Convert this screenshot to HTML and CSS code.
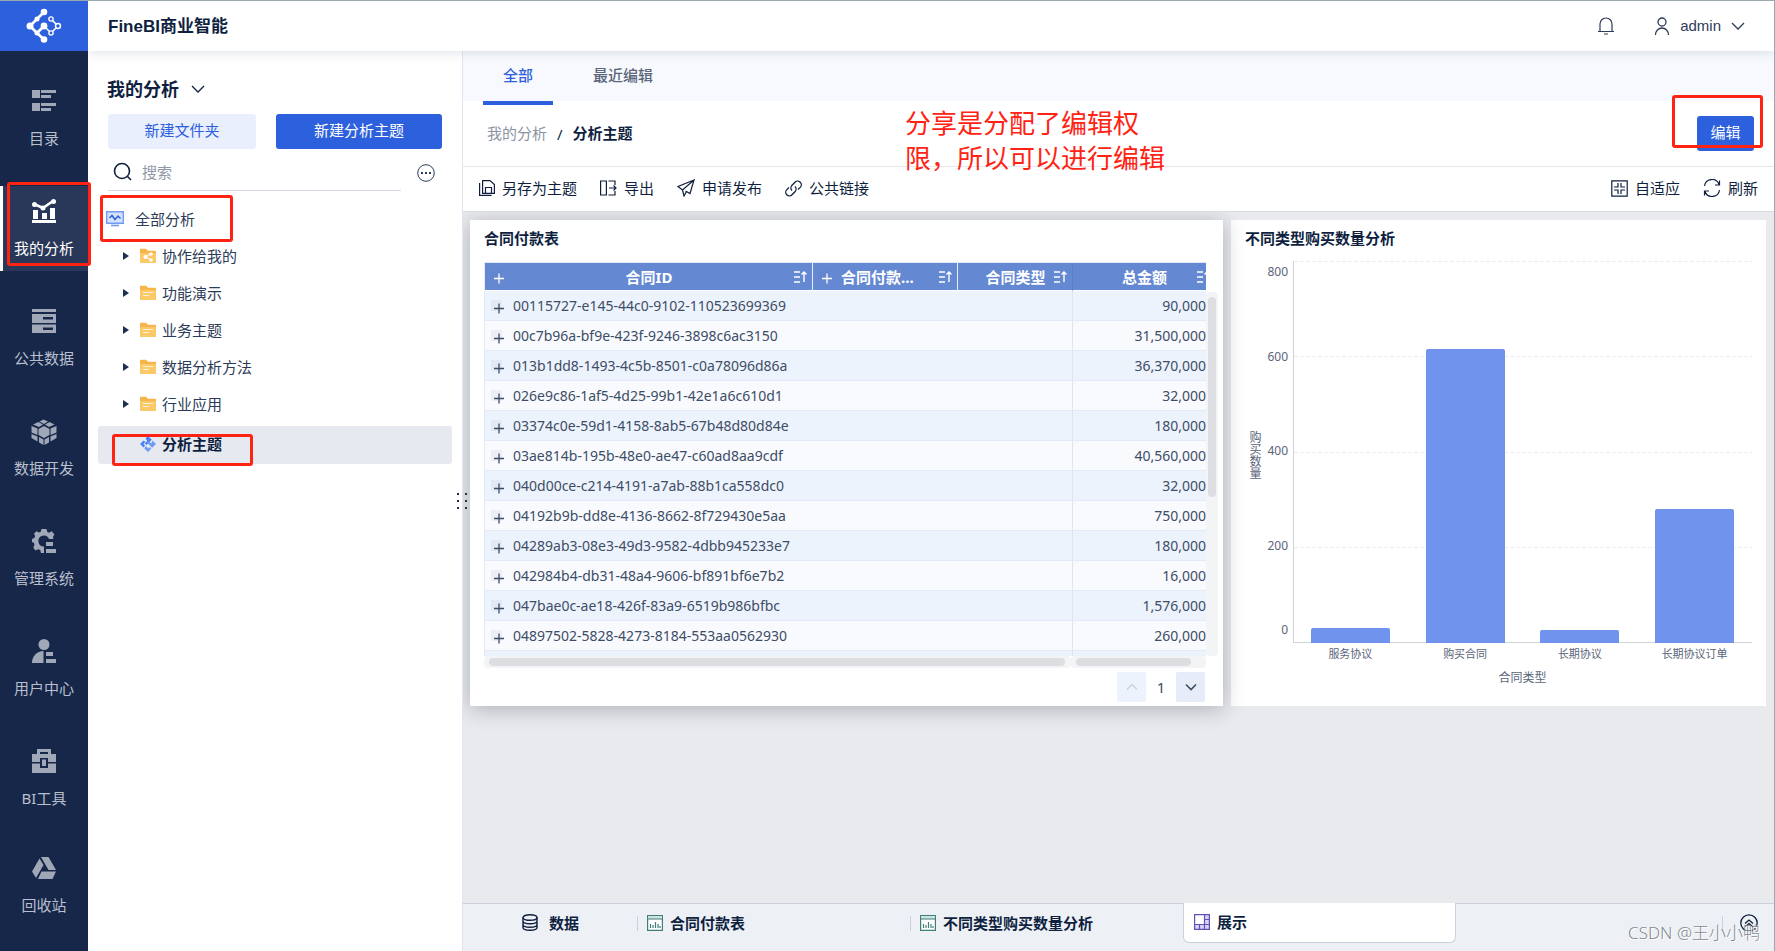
FILE: index.html
```html
<!DOCTYPE html>
<html lang="zh-CN">
<head>
<meta charset="utf-8">
<title>FineBI商业智能</title>
<link rel="stylesheet" href="styles.css">
</head>
<body>
<svg class="defs" aria-hidden="true">
  <symbol id="sort" viewBox="0 0 14 14"><path d="M1 2h6M1 7h6M1 12h6M11 12V2M8.500 4.500 11 2l2.500 2.500" fill="none" stroke="currentColor" stroke-width="1.400"/></symbol>
  <symbol id="plus" viewBox="0 0 14 14"><path class="plus-bg" d="M0 0h11v11H0z"/><path d="M3 8.500h10M8 3.500v10" fill="none" stroke="currentColor" stroke-width="1.300"/></symbol>
  <symbol id="down" viewBox="0 0 14 14"><path d="M1 4l6 6 6-6" fill="none" stroke="currentColor" stroke-width="1.300"/></symbol>
  <symbol id="folder" viewBox="0 0 16 16"><path d="M0 1.500A.8.8 0 0 1 .8.700H6l2 2h7a1 1 0 0 1 1 1V14a1 1 0 0 1-1 1H1a1 1 0 0 1-1-1z" fill="#f5b54a"/><path d="M0 5h16v9a1 1 0 0 1-1 1H1a1 1 0 0 1-1-1z" fill="#fcc968"/></symbol>
  <symbol id="chart-sheet" viewBox="0 0 16 16"><path d="M.6.600h14.800v14.800H.6z" fill="#fff" stroke="#3f7f78" stroke-width="1.200"/><path d="M1 1h14v3H1z" fill="#cfe3e0"/><path d="M1 4h14" stroke="#3f7f78"/><path d="M3.500 13V9M6 13v-3M8.500 13V7M11 13v-4M13 13v-2" stroke="#3f7f78" stroke-width="1.200"/></symbol>
</svg>

<aside class="sidebar">
  <a class="logo" href="#" aria-label="FineBI">
    <svg width="36" height="36" viewBox="0 0 36 36" fill="none" stroke="#fff"><path d="M18 4 11 11 4 18l7 7 7 6.500M11 25l7-7" stroke-width="2.600"/><path d="M18 18l7 7 7-7-7-7" stroke-width="1.500"/><g fill="#fff" stroke="none"><circle cx="18" cy="4" r="3.300"/><circle cx="4" cy="18" r="3.500"/><circle cx="18" cy="31.500" r="3.300"/><circle cx="18" cy="18" r="3.400"/><circle cx="11" cy="11" r="2.500"/><circle cx="11" cy="25" r="2.500"/></g><g fill="#2c60dc" stroke-width="1.400"><circle cx="25" cy="11" r="2.100"/><circle cx="32" cy="18" r="2.500"/><circle cx="25" cy="25" r="2.100"/></g></svg>
  </a>
  <nav class="nav">
    <a class="nav-item" href="#"><svg width="24" height="24" viewBox="0 0 24 24"><path d="M0 1h8v8H0zM9 1h15v3H9zM9 6h10v3H9zM0 14h8v8H0zM9 14h15v3H9zM9 19h10v3H9z"/></svg>目录</a>
    <a class="nav-item active" href="#"><svg width="24" height="24" viewBox="0 0 24 24"><path d="M0 21h24v3H0zM1 11h5v9H1zM10 14h5v6h-5zM18 9h5v11h-5z"/><path d="M2 5l9 4L21 2" fill="none" stroke="#fff" stroke-width="2.500"/><circle cx="2.500" cy="5.500" r="2.500"/><circle cx="11" cy="9" r="2.500"/><circle cx="21.500" cy="2.500" r="2.500"/></svg>我的分析<span class="mark mark-nav"></span></a>
    <a class="nav-item" href="#"><svg width="24" height="24" viewBox="0 0 24 24"><path fill-rule="evenodd" d="M0 0h24v3H0zM0 5h24v9H0zM11 8v2.500h10V8zM0 15.500h24V24H0zM11 18.500V21h10v-2.500z"/></svg>公共数据</a>
    <a class="nav-item" href="#"><svg width="26" height="26" viewBox="0 0 26 26"><path d="M12.500.500 17 2.500 13 5 8.500 2.500zM7.500 3l4.500 2.500-4 2.500L2 5.500zM18.500 3l5 2.500L18 8l-4-2.500zM13 7l5.500 3v6L13 19l-5.500-3v-6zM.5 7l6 2.500V16l-6-2.500zM25.500 7l-6 2.500V16l6-2.500zM.5 15l6 2.500v5l-6-3.500zM25.500 15l-6 2.500v5l6-3.500zM8 18l4.500 2.500V26L8 23.500zM18 18l-4.500 2.500V26l4.500-2.500z"/></svg>数据开发</a>
    <a class="nav-item" href="#"><svg width="24" height="24" viewBox="0 0 24 24"><path d="M9.500 0h5l.8 3 1.700.8 2.800-1.500 2.600 3.200-1.500 2.500.6 2H17a5.500 5.500 0 1 0-5 7.500V24H9l-.8-3-2-.8-2.800 1.300L1.300 18.500l1.200-2.700L2 14l-2-1v-3l2.300-1 .8-2L2 4.500 4.500 2.300 7 3.500l1.800-.8zM14 13h7v4h-7zM14 20h10v4H14z"/></svg>管理系统</a>
    <a class="nav-item" href="#"><svg width="24" height="24" viewBox="0 0 24 24"><circle cx="12" cy="5.500" r="5.500"/><path d="M11.500 12v12H0C0 17 5 12 11.500 12zM14 13h7v4h-7zM14 20h10v4H14z"/></svg>用户中心</a>
    <a class="nav-item" href="#"><svg width="24" height="24" viewBox="0 0 24 24"><path fill-rule="evenodd" d="M5 0h14v5h5v8h-8V9H8v4H0V5h5zM8 3v2h8V3zM0 14.500h8V19h8v-4.500h8V24H0zM10 10.500h4V17h-4z"/></svg>BI工具</a>
    <a class="nav-item last" href="#"><svg width="24" height="24" viewBox="0 0 24 24"><path d="M9 1h7.500L24 14h-7.500zM7.500 2.500 11.500 9 4 22 0 15.500zM9.500 15.500H24L20.500 23H6z"/></svg>回收站</a>
  </nav>
</aside>

<div class="app">
  <header class="topbar">
    <h1 class="brand">FineBI商业智能</h1>
    <button class="plain bell" aria-label="消息"><svg width="18" height="18" viewBox="0 0 18 18" fill="none" stroke="currentColor" stroke-width="1.200"><path d="M1 14.500h16M3 14.500V7a6 6 0 0 1 12 0v7.500M7 17h4"/></svg></button>
    <button class="plain user"><svg width="16" height="18" viewBox="0 0 16 18" fill="none" stroke="currentColor" stroke-width="1.300"><circle cx="8" cy="5" r="4"/><path d="M1.500 18a6.500 7 0 0 1 13 0"/></svg><span>admin</span><svg width="14" height="14"><use href="#down"/></svg></button>
  </header>

  <div class="body">
    <section class="panel">
      <button class="plain panel-title">我的分析<svg width="14" height="14"><use href="#down"/></svg></button>
      <div class="panel-actions">
        <button class="btn btn-soft">新建文件夹</button>
        <button class="btn btn-primary">新建分析主题</button>
      </div>
      <div class="search-row">
        <label class="search"><svg width="20" height="20" viewBox="0 0 20 20" fill="none" stroke="currentColor" stroke-width="1.600"><circle cx="9" cy="9" r="7.500"/><path d="M14.500 14.500 18 18"/></svg><input type="text" placeholder="搜索" aria-label="搜索"></label>
        <button class="plain more" aria-label="更多"><svg width="18" height="18" viewBox="0 0 18 18"><circle cx="9" cy="9" r="8.300" fill="none" stroke="currentColor"/><path d="M4 8h2v2H4zM8 8h2v2H8zM12 8h2v2h-2z" fill="currentColor"/></svg></button>
      </div>
      <ul class="tree">
        <li class="tree-root"><svg width="18" height="16" viewBox="0 0 18 16"><path d="M.7.700h16.600v11.600H.7z" fill="#d6e2fd" stroke="#6f9af5" stroke-width="1.400"/><path d="M3.500 7 6 4.500l3 4L12 5l2.500 2.500" fill="none" stroke="#2c60dc" stroke-width="1.500"/><path d="M5 14.500h8" stroke="#6f9af5" stroke-width="1.600"/></svg>全部分析<span class="mark mark-root"></span></li>
        <li class="tree-row"><i class="caret"></i><svg width="16" height="16"><use href="#folder"/><path d="M11 5.500 6 9l5 3" stroke="#fff" fill="none"/><g fill="#fff"><circle cx="11" cy="6" r="1.800"/><circle cx="5.500" cy="9" r="2"/><circle cx="11" cy="12" r="1.800"/></g></svg>协作给我的</li>
        <li class="tree-row"><i class="caret"></i><svg width="16" height="16"><use href="#folder"/><path d="M3 7.500h10M3 10.500h6" stroke="#fff3d6"/></svg>功能演示</li>
        <li class="tree-row"><i class="caret"></i><svg width="16" height="16"><use href="#folder"/><path d="M3 7.500h10M3 10.500h6" stroke="#fff3d6"/></svg>业务主题</li>
        <li class="tree-row"><i class="caret"></i><svg width="16" height="16"><use href="#folder"/><path d="M3 7.500h10M3 10.500h6" stroke="#fff3d6"/></svg>数据分析方法</li>
        <li class="tree-row"><i class="caret"></i><svg width="16" height="16"><use href="#folder"/><path d="M3 7.500h10M3 10.500h6" stroke="#fff3d6"/></svg>行业应用</li>
        <li class="tree-row selected"><svg width="16" height="16" viewBox="0 0 16 16"><path d="M8 0l3.800 3.800-5.300 5.300L4.800 7.400l2.400-2.400L5.500 2.500z" fill="#4a82f5"/><path d="M12.500 4.500 16 8l-3.800 3.800-5-5L8.800 5.200l2.400 2.400z" fill="#6f9af5"/><path d="M8 16l-3.800-3.800 2-2L8.500 12.500l1.500-1.500 1.200 1.800z" fill="#6f9af5"/><path d="M3.500 4.500 0 8l3.500 3.500L5.200 9.800 3.500 8l2-2z" fill="#4a82f5"/></svg>分析主题<span class="mark mark-leaf"></span></li>
      </ul>
      <span class="grip"></span>
    </section>

    <main class="main">
      <nav class="tabs"><a class="tab current" href="#">全部</a><a class="tab" href="#">最近编辑</a></nav>
      <div class="crumbs">
        <a href="#">我的分析</a><span>/</span><strong>分析主题</strong>
        <span class="edit-wrap"><button class="btn btn-primary">编辑</button><span class="mark mark-edit"></span></span>
        <p class="note">分享是分配了编辑权<br>限，所以可以进行编辑</p>
      </div>
      <div class="toolbar">
        <button class="plain"><svg width="16" height="16" viewBox="0 0 16 16" fill="none" stroke="currentColor" stroke-width="1.200"><path d="M3.600.6H11l4.400 4v8.800H3.600zM.6 3v12.400h12M6.500 13V7.500h6V13"/></svg>另存为主题</button>
        <button class="plain"><svg width="17" height="16" viewBox="0 0 17 16" fill="none" stroke="currentColor" stroke-width="1.200"><path d="M.6 1h5.800v14H.6zM8.500 1H15v4M8.500 15H15v-4M9 8h7M13.500 5.500 16 8l-2.500 2.500"/></svg>导出</button>
        <button class="plain"><svg width="18" height="18" viewBox="0 0 18 18" fill="none" stroke="currentColor" stroke-width="1.200"><path d="M17 1 1 7.500l4.500 3.500L17 1l-4 13.500L8.500 12M5.500 11l1.500 6 2.500-4.500"/></svg>申请发布</button>
        <button class="plain"><svg width="17" height="17" viewBox="0 0 17 17" fill="none" stroke="currentColor" stroke-width="1.300"><path d="M7 10.500a3.700 3.700 0 0 1 0-5.200L10 2.200a3.600 3.600 0 0 1 5.200 5.200L13 9.500M10 6.500a3.700 3.700 0 0 1 0 5.200L7 14.800a3.600 3.600 0 0 1-5.200-5.200L4 7.500"/></svg>公共链接</button>
        <span class="spacer"></span>
        <button class="plain"><svg width="17" height="17" viewBox="0 0 17 17" fill="none" stroke="currentColor" stroke-width="1.200"><path d="M.8.800h15.400v15.400H.8zM3 7h4V3M10 3v4h4M3 10h4v4M10 14v-4h4"/></svg>自适应</button>
        <button class="plain"><svg width="18" height="18" viewBox="0 0 18 18" fill="none" stroke="currentColor" stroke-width="1.200"><path d="M1.500 7A7.500 7.500 0 0 1 16 5.500M16.500 11A7.500 7.500 0 0 1 2 12.500M16.500 1.500v4.500H12M1.500 16.500V12H6"/></svg>刷新</button>
      </div>

      <div class="canvas">
        <section class="card card-table">
          <h2>合同付款表</h2>
          <div class="grid-box">
            <div class="table-clip">
              <table>
                <colgroup><col class="c1"><col class="c2"><col class="c3"><col></colgroup>
                <thead><tr>
                  <th><div class="th"><svg class="pl" width="14" height="14"><use href="#plus"/></svg><span>合同ID</span><svg class="so" width="14" height="14"><use href="#sort"/></svg></div></th>
                  <th><div class="th th-left"><svg class="pl" width="14" height="14"><use href="#plus"/></svg><span>合同付款...</span><svg class="so" width="14" height="14"><use href="#sort"/></svg></div></th>
                  <th><div class="th"><span class="pl"></span><span>合同类型</span><svg class="so" width="14" height="14"><use href="#sort"/></svg></div></th>
                  <th><div class="th"><span class="pl"></span><span>总金额</span><svg class="so" width="14" height="14"><use href="#sort"/></svg></div></th>
                </tr></thead>
                <tbody>
                  <tr><td><svg width="14" height="14"><use href="#plus"/></svg>00115727-e145-44c0-9102-110523699369</td><td></td><td></td><td>90,000</td></tr>
                  <tr><td><svg width="14" height="14"><use href="#plus"/></svg>00c7b96a-bf9e-423f-9246-3898c6ac3150</td><td></td><td></td><td>31,500,000</td></tr>
                  <tr><td><svg width="14" height="14"><use href="#plus"/></svg>013b1dd8-1493-4c5b-8501-c0a78096d86a</td><td></td><td></td><td>36,370,000</td></tr>
                  <tr><td><svg width="14" height="14"><use href="#plus"/></svg>026e9c86-1af5-4d25-99b1-42e1a6c610d1</td><td></td><td></td><td>32,000</td></tr>
                  <tr><td><svg width="14" height="14"><use href="#plus"/></svg>03374c0e-59d1-4158-8ab5-67b48d80d84e</td><td></td><td></td><td>180,000</td></tr>
                  <tr><td><svg width="14" height="14"><use href="#plus"/></svg>03ae814b-195b-48e0-ae47-c60ad8aa9cdf</td><td></td><td></td><td>40,560,000</td></tr>
                  <tr><td><svg width="14" height="14"><use href="#plus"/></svg>040d00ce-c214-4191-a7ab-88b1ca558dc0</td><td></td><td></td><td>32,000</td></tr>
                  <tr><td><svg width="14" height="14"><use href="#plus"/></svg>04192b9b-dd8e-4136-8662-8f729430e5aa</td><td></td><td></td><td>750,000</td></tr>
                  <tr><td><svg width="14" height="14"><use href="#plus"/></svg>04289ab3-08e3-49d3-9582-4dbb945233e7</td><td></td><td></td><td>180,000</td></tr>
                  <tr><td><svg width="14" height="14"><use href="#plus"/></svg>042984b4-db31-48a4-9606-bf891bf6e7b2</td><td></td><td></td><td>16,000</td></tr>
                  <tr><td><svg width="14" height="14"><use href="#plus"/></svg>047bae0c-ae18-426f-83a9-6519b986bfbc</td><td></td><td></td><td>1,576,000</td></tr>
                  <tr><td><svg width="14" height="14"><use href="#plus"/></svg>04897502-5828-4273-8184-553aa0562930</td><td></td><td></td><td>260,000</td></tr>
                  <tr><td></td><td></td><td></td><td></td></tr>
                </tbody>
              </table>
            </div>
            <div class="vtrack"><i></i></div>
            <div class="htracks"><div class="htrack wide"><i></i></div><div class="htrack"><i></i></div></div>
          </div>
          <div class="pager">
            <button class="page-btn" disabled aria-label="上一页"><svg width="12" height="12" viewBox="0 0 12 12"><path d="M1 8.500l5-5 5 5" fill="none" stroke="#cfd2d8" stroke-width="1.400"/></svg></button>
            <span>1</span>
            <button class="page-btn next" aria-label="下一页"><svg width="12" height="12" viewBox="0 0 12 12"><path d="M1 3.500l5 5 5-5" fill="none" stroke="#3d4d66" stroke-width="1.600"/></svg></button>
          </div>
        </section>

        <section class="card card-chart">
          <h2>不同类型购买数量分析</h2>
          <div class="chart">
            <div class="y-title">购买数量</div>
            <div class="y-axis"><span>800</span><span>600</span><span>400</span><span>200</span><span>0</span></div>
            <div class="plot-grid"><i></i><i></i><i></i><i></i></div>
            <div class="bars">
              <i style="height:4%"></i><i style="height:77%"></i><i style="height:3.300%"></i><i style="height:35.200%"></i>
            </div>
            <div class="x-axis"><span>服务协议</span><span>购买合同</span><span>长期协议</span><span>长期协议订单</span></div>
            <div class="x-title">合同类型</div>
          </div>
        </section>
      </div>

      <footer class="sheets">
        <button class="sheet data"><svg width="16" height="17" viewBox="0 0 16 17" fill="none" stroke="currentColor" stroke-width="1.400"><ellipse cx="8" cy="3.500" rx="7" ry="2.800"/><path d="M1 3.500v10c0 3.700 14 3.700 14 0v-10M1 7c0 3.700 14 3.700 14 0M1 10.500c0 3.700 14 3.700 14 0"/></svg>数据</button>
        <button class="sheet"><svg width="16" height="16"><use href="#chart-sheet"/></svg>合同付款表</button>
        <button class="sheet"><svg width="16" height="16"><use href="#chart-sheet"/></svg>不同类型购买数量分析</button>
        <button class="sheet on"><svg width="16" height="16" viewBox="0 0 16 16"><path d="M.6.600h14.800v14.800H.6z" fill="#d9d3f7"/><path d="M1 1h9.500v9.500H1z" fill="#fff"/><path d="M.6.600h14.800v14.800H.6zM10.500.600v14.800M.6 10.500h14.800M10.500 5.500h5M5.500 10.500v5" fill="none" stroke="#6450b4" stroke-width="1.200"/></svg>展示</button>
        <span class="spacer"></span>
        <button class="plain up" aria-label="展开"><svg width="18" height="18" viewBox="0 0 18 18" fill="none" stroke="currentColor" stroke-width="1.300"><circle cx="9" cy="9" r="8.200"/><path d="M5 9.500l4-3.500 4 3.500M5 13l4-3.500 4 3.500"/></svg></button>
        <span class="watermark">CSDN @王小小鸭</span>
      </footer>
    </main>
  </div>
</div>
</body>
</html>
```

FILE: styles.css
```css
* { box-sizing: border-box; }
body {
  margin: 0;
  min-height: 100vh;
  display: flex;
  border-top: 1px solid #9aa9ad;
  border-right: 1px solid #9aa9ad;
  background: #fff;
  color: #0f1f3f;
  font: 15px/20px "Noto Sans", "Noto Sans CJK SC", sans-serif;
}
h1, h2, p, ul { margin: 0; padding: 0; }
ul { list-style: none; }
a { color: inherit; text-decoration: none; }
button { font: inherit; color: inherit; border: 0; padding: 0; cursor: pointer; }
svg { flex: none; }
.defs { display: none; }
.plain { display: flex; align-items: center; background: none; }
.spacer { flex: 1; }

.btn { height: 35px; padding-bottom: 3px; border-radius: 3px; }
.btn-soft { background: #e9effd; color: #2c60dc; }
.btn-primary { background: #2c60dc; color: #fff; }

/* red annotation frames lie over the interface */
.mark { position: absolute; border: 3px solid #ff2314; border-radius: 3px; z-index: 5; pointer-events: none; }
.mark-nav { left: 4px; right: -3px; top: -4px; bottom: 5px; }
.mark-root { left: 0; width: 133px; top: -5px; height: 47px; }
.mark-leaf { left: 14px; width: 141px; top: 8px; height: 32px; }
.mark-edit { left: -25px; right: -9px; top: -21px; bottom: 3px; }

.sidebar { width: 88px; flex: none; background: #16274a; position: relative; z-index: 3; }
.logo { height: 50px; display: flex; align-items: center; justify-content: center; background: #2c60dc; }
.nav { display: flex; flex-direction: column; gap: 25px; padding-top: 25px; }
.nav-item {
  position: relative;
  height: 85px;
  padding: 13px 0;
  display: flex;
  flex-direction: column;
  align-items: center;
  justify-content: space-between;
  color: #b9bfcc;
  fill: #a0a8b8;
}
.nav-item.active { background: #293758; border-left: 3px solid #fff; padding-right: 3px; color: #fff; fill: #fff; }
.nav-item.last { margin-top: -3px; }

.app { flex: 1; min-width: 0; display: flex; flex-direction: column; }
.topbar {
  height: 50px;
  display: flex;
  align-items: center;
  padding: 0 29px 0 20px;
  background: #fff;
  box-shadow: 0 2px 10px rgba(20, 30, 60, .12);
  position: relative;
  z-index: 2;
  color: #2c3c58;
}
.brand { flex: 1; padding-top: 1px; font: bold 17px/26px "Liberation Sans", "Noto Sans CJK SC", sans-serif; color: #0f1f3f; }
.bell { margin-right: 39px; }
.user { gap: 10px; }
.user span { font: 15px/20px "Liberation Sans", sans-serif; }

.body { flex: 1; display: flex; min-height: 0; }
.panel { width: 374px; flex: none; position: relative; padding: 25px 0 0; }
.panel-title { margin-left: 19px; gap: 12px; font-size: 18px; line-height: 26px; font-weight: 700; }
.panel-actions { display: grid; grid-template-columns: 148px 166px; gap: 20px; padding: 12px 0 0 20px; }
.search-row { display: flex; align-items: center; padding: 4px 27px 0 20px; gap: 16px; justify-content: space-between; }
.search { display: flex; align-items: center; width: 294px; height: 38px; padding-left: 5px; gap: 7px; border-bottom: 1px solid #d7dae2; }
.search input { flex: 1; min-width: 0; border: 0; outline: 0; font: inherit; background: none; }
.search input::placeholder { color: #9098a8; }
.more { padding-top: 2px; color: #2c3c58; }
.tree { padding-top: 9px; color: #2c3c58; }
.tree-root { position: relative; display: flex; align-items: center; height: 38px; margin: 0 10px 0 12px; padding-left: 6px; gap: 11px; }
.tree-row { position: relative; display: flex; align-items: center; height: 37px; margin: 0 10px; padding: 0 0 1px 25px; gap: 6px; }
.caret { width: 11px; border: solid transparent; border-width: 4px 0 4px 6px; border-left-color: #1f2f4f; }
.tree-row.selected { height: 38px; margin-top: 3px; padding: 0 0 2px 42px; background: #e6e9f0; border-radius: 3px; font-weight: 700; color: #0f1f3f; }
.grip {
  position: absolute;
  right: -6px;
  top: 442px;
  width: 11px;
  height: 17px;
  z-index: 4;
  background:
    linear-gradient(#1f2f4f, #1f2f4f) 0 0 / 2px 2px no-repeat,
    linear-gradient(#1f2f4f, #1f2f4f) 0 7px / 2px 2px no-repeat,
    linear-gradient(#1f2f4f, #1f2f4f) 0 14px / 2px 2px no-repeat,
    linear-gradient(#1f2f4f, #1f2f4f) 8px 0 / 2px 2px no-repeat,
    linear-gradient(#1f2f4f, #1f2f4f) 8px 7px / 2px 2px no-repeat,
    linear-gradient(#1f2f4f, #1f2f4f) 8px 14px / 2px 2px no-repeat;
}

.main { flex: 1; min-width: 0; display: flex; flex-direction: column; border-left: 1px solid #e3e5ee; }
.tabs { display: flex; gap: 20px; height: 50px; padding-left: 20px; background: #f7f9fe; }
.tab { height: 54px; padding: 14px 20px 0; color: #5a6579; font-weight: 500; }
.tab.current { color: #2c60dc; border-bottom: 4px solid #2c60dc; }
.crumbs { position: relative; display: flex; align-items: center; gap: 10px; height: 66px; padding: 0 20px 0 24px; border-bottom: 1px solid #e6e8ee; }
.crumbs a, .crumbs strong { padding-bottom: 2px; }
.crumbs a { color: #8c94a4; }
.edit-wrap { position: relative; margin-left: auto; }
.edit-wrap .btn { display: block; width: 57px; }
.note { position: absolute; left: 442px; top: 5px; color: #ff2314; font-size: 26px; line-height: 35px; }
.toolbar { display: flex; align-items: center; gap: 23px; height: 45px; padding: 0 16px 2px; border-bottom: 1px solid #d9dce2; }
.toolbar .plain { gap: 7px; }

.canvas {
  flex: 1;
  display: grid;
  grid-template-columns: 753fr 535fr;
  align-content: start;
  gap: 8px;
  padding: 8px 8px 8px 7px;
  background: #e8eaee;
  overflow: hidden;
}
.card { background: #fff; padding: 8px 14px 4px; min-width: 0; }
.card h2 { font-size: 15px; line-height: 20px; font-weight: 700; }
.card-table { position: relative; z-index: 1; box-shadow: 0 3px 20px rgba(20, 25, 40, .28); padding-right: 5px; }
.grid-box { display: grid; grid-template-columns: 1fr 12px; margin-top: 14px; }
.table-clip { height: 394px; overflow: hidden; border-left: 1px solid #e3eaf7; border-top: 1px solid #e3eaf7; }
table { width: calc(100% + 10px); table-layout: fixed; border-collapse: separate; border-spacing: 0; color: #3d4d66; font: 14px/20px "Noto Sans", "Noto Sans CJK SC", sans-serif; }
.c1 { width: 328px; }
.c2 { width: 145px; }
.c3 { width: 115px; }
th { height: 28px; padding: 0; background: #6488d1; color: #fff; border-right: 1px solid #e8eefa; border-bottom: 1px solid #fff; font-size: 15px; }
th:nth-child(3) { border-right-color: #5c7ec4; }
.th { display: flex; align-items: center; justify-content: space-between; padding: 0 5px 0 6px; white-space: nowrap; }
.th-left span { flex: 1; padding-left: 8px; text-align: left; }
.pl { width: 14px; }
.plus-bg { fill: rgba(100, 120, 160, .08); }
td { height: 30px; padding: 1px 10px 0 6px; border-bottom: 1px solid #e3eaf7; background: #edf3fc; white-space: nowrap; }
tr:nth-child(even) td { background: #f8fafe; }
td svg { vertical-align: middle; margin-right: 8px; }
td:nth-child(3) { border-right: 1px solid #dfe4ee; }
td:nth-child(4) { text-align: right; }
.vtrack { margin-top: 30px; padding: 5px 2px; background: #f3f4f6; border-radius: 4px; }
.vtrack i { display: block; height: 200px; border-radius: 4px; background: #dcdee2; }
.htracks { display: grid; grid-template-columns: 587fr 135fr; }
.htrack { height: 12px; padding: 2px 15px 2px 5px; background: #f3f4f6; border-radius: 4px; }
.htrack.wide { padding-right: 6px; }
.htrack i { display: block; height: 8px; border-radius: 4px; background: #dcdee2; }
.pager { display: flex; align-items: center; justify-content: flex-end; padding: 4px 13px 0 0; color: #3d4d66; }
.pager span { width: 30px; text-align: center; }
.page-btn { width: 29px; height: 30px; display: grid; place-items: center; border-radius: 2px; background: #edf3fc; }
.page-btn.next { background: #e6ecf8; }

.card-chart { display: flex; flex-direction: column; }
.chart {
  flex: 1;
  display: grid;
  grid-template-columns: 18px 30px 1fr;
  grid-template-rows: 382px 24px 22px;
  margin-top: 13px;
  color: #5a6579;
  font-size: 12px;
}
.y-title { writing-mode: vertical-rl; text-orientation: upright; align-self: center; padding-top: 6px; line-height: 18px; }
.y-axis { display: grid; grid-template-rows: 1fr 2fr 2fr 2fr 1fr; align-items: center; text-align: right; padding: 1px 5px 3px 0; }
.y-axis span:first-child { align-self: start; }
.y-axis span:last-child { align-self: end; }
.plot-grid { grid-area: 1 / 3; display: grid; border-left: 1px solid #d0d3d8; border-bottom: 1px solid #d0d3d8; }
.plot-grid i { background: repeating-linear-gradient(90deg, #ececee 0 4px, transparent 4px 6px) 0 0 / 100% 1px no-repeat; }
.bars, .x-axis { display: grid; grid-template-columns: repeat(4, 1fr); }
.bars { grid-area: 1 / 3; align-items: end; }
.bars i { width: 69%; justify-self: center; background: #7094ee; border-radius: 2px 2px 0 0; }
.x-axis { grid-area: 2 / 3; text-align: center; font-size: 11px; line-height: 22px; }
.x-title { grid-area: 3 / 3; text-align: center; line-height: 22px; }

.sheets { position: relative; display: flex; height: 48px; padding-right: 16px; border-top: 1px solid #cbd1dc; background: #edf1f6; }
.sheet { position: relative; display: flex; align-items: center; gap: 7px; width: 273px; height: 39px; padding: 0 0 2px 10px; background: none; font-weight: 700; }
.sheet.data { width: 174px; padding-left: 59px; gap: 11px; }
.sheet.on { margin-top: -1px; height: 40px; background: #fff; border: 1px solid #cbd1dc; border-top: 0; border-radius: 0 0 6px 6px; }
.sheet + .sheet:not(.on) { background: linear-gradient(#cbd1dc, #cbd1dc) 0 center / 1px 15px no-repeat; }
.up { height: 39px; padding: 0 0 1px 18px; background: linear-gradient(#cbd1dc, #cbd1dc) 0 center / 1px 15px no-repeat; }
.watermark { position: absolute; right: 14px; bottom: 6px; color: #85888f; text-shadow: 1px 1px 0 #fff; font: 300 17px/24px "Noto Sans", "Noto Sans CJK SC", sans-serif; }
```
